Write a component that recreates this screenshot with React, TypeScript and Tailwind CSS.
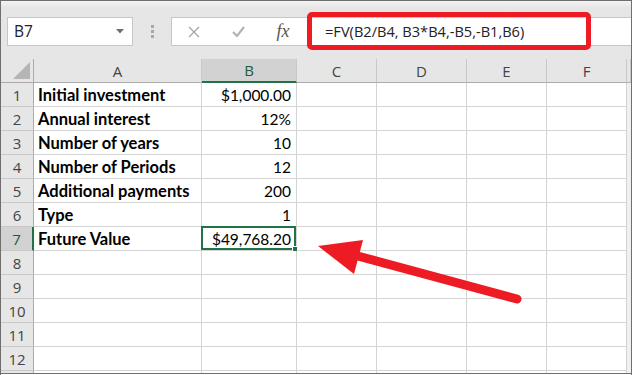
import React from 'react'

const ROWS: [string, string][] = [
  ['Initial investment', '$1,000.00'],
  ['Annual interest', '12%'],
  ['Number of years', '10'],
  ['Number of Periods', '12'],
  ['Additional payments', '200'],
  ['Type', '1'],
  ['Future Value', '$49,768.20'],
  ['', ''],
  ['', ''],
  ['', ''],
  ['', ''],
  ['', ''],
  ['', ''],
]

const COL_HEADS = ['A', 'B', 'C', 'D', 'E', 'F', '']

const hdrFont = "font-['Open_Sans',sans-serif] text-[15px] text-[#444]"

export default function App() {
  return (
    <div className="relative w-[632px] h-[375px] bg-white border-t border-l border-r border-[#6f6f6f] overflow-hidden">
      {/* toolbar */}
      <div className="h-[58px] bg-gradient-to-b from-[#f4f4f4] via-[#e6e6e6] via-[12%] to-[#e6e6e6] pt-[16px] pl-[6px] flex items-start">
        <div className="w-[126px] h-[29px] bg-white border border-[#c6c6c6] flex items-center justify-between pl-[6px] pr-[8px]">
          <span className="font-['Open_Sans',sans-serif] text-[15.5px] text-[#222]">B7</span>
          <svg width="8" height="5" viewBox="0 0 8 5"><path d="M0 0 H8 L4 4.5 Z" fill="#707070" /></svg>
        </div>
        <div className="w-[38px] h-[29px] flex flex-col items-center justify-center gap-[2px]">
          <span className="w-[3px] h-[3px] bg-[#a8a8a8]" />
          <span className="w-[3px] h-[3px] bg-[#a8a8a8]" />
          <span className="w-[3px] h-[3px] bg-[#a8a8a8]" />
        </div>
        <div className="flex-1 h-[29px] bg-white border-t border-b border-l border-[#c6c6c6] flex items-center">
          <div className="w-[44px] flex justify-center">
            <svg width="12" height="12" viewBox="0 0 12 12"><path d="M1 1 L11 11 M11 1 L1 11" stroke="#a6a6a6" strokeWidth="1.3" /></svg>
          </div>
          <div className="w-[44px] flex justify-center">
            <svg width="13" height="11" viewBox="0 0 13 11"><path d="M1 6 L5 10 L12 1" stroke="#b3b3b3" strokeWidth="2.2" fill="none" /></svg>
          </div>
          <span className="w-[46px] text-center font-['Liberation_Serif',serif] italic text-[18px] text-[#555]">fx</span>
          <span className="ml-[19px] font-['Open_Sans',sans-serif] text-[14.6px] text-[#222] whitespace-nowrap">
            =FV(B2/B4, B3*B4,-B5,-B1,B6)
          </span>
        </div>
      </div>

      {/* sheet */}
      <div className="h-[315px] overflow-hidden border-b border-[#6f6f6f]">
        <div className="grid grid-cols-[33px_168px_95px_80px_90px_80px_80px_1fr]">
          {/* column headers */}
          <div className="h-[24px] bg-[#e6e6e6] border-r border-b border-[#ababab] flex items-end justify-end pr-[3px] pb-[3px]">
            <svg width="17" height="17" viewBox="0 0 17 17"><path d="M17 0 V17 H0 Z" fill="#b5b5b5" /></svg>
          </div>
          {COL_HEADS.map((c, i) => (
            <div
              key={'h' + i}
              className={`h-[24px] flex items-center justify-center pt-[1px] border-r border-[#c8c8c8] ${hdrFont} ${
                c === 'B'
                  ? 'bg-[#d2d2d2] border-b-2 border-b-[#217346] !text-[#1e5a38]'
                  : 'bg-[#e6e6e6] border-b border-b-[#ababab]'
              }`}
            >
              {c}
            </div>
          ))}

          {ROWS.map(([label, val], r) => {
            const sel = r === 6
            return (
              <React.Fragment key={r}>
                <div
                  className={`h-[24px] flex items-center justify-center pt-[1px] border-b border-[#c8c8c8] ${hdrFont} ${
                    sel
                      ? 'bg-[#d2d2d2] border-r-2 border-r-[#217346] !text-[#1e5a38]'
                      : 'bg-[#e6e6e6] border-r border-r-[#ababab]'
                  }`}
                >
                  {r < 12 ? r + 1 : ''}
                </div>
                <div className="h-[24px] flex items-center pl-[4px] pt-[2px] border-r border-b border-[#d4d4d4] font-bold whitespace-nowrap font-['Lato',sans-serif] text-[16.5px] text-black">
                  {label}
                </div>
                <div className="relative h-[24px] flex items-center justify-end pr-[5px] pt-[2px] border-r border-b border-[#d4d4d4] font-['Lato',sans-serif] text-[15.5px] text-black">
                  {val}
                  {sel && (
                    <div className="absolute -left-[1px] -top-[1px] right-0 bottom-0 border-2 border-[#217346]">
                      <span className="absolute -right-[4px] -bottom-[4px] w-[6px] h-[6px] bg-[#217346] border border-white" />
                    </div>
                  )}
                </div>
                <div className="h-[24px] border-r border-b border-[#d4d4d4]" />
                <div className="h-[24px] border-r border-b border-[#d4d4d4]" />
                <div className="h-[24px] border-r border-b border-[#d4d4d4]" />
                <div className="h-[24px] border-r border-b border-[#d4d4d4]" />
                <div className="h-[24px] bg-[#f0f0f0]" />
              </React.Fragment>
            )
          })}
        </div>
      </div>

      {/* annotations */}
      <div className="absolute left-[306px] top-[11px] w-[284px] h-[38px] border-[5px] border-[#ed1c24] rounded-[5px] pointer-events-none" />
      <svg className="absolute left-0 top-0 pointer-events-none" width="633" height="375" viewBox="-1 -1 633 375">
        <line x1="515" y1="297" x2="352" y2="253" stroke="#ed1c24" strokeWidth="9" strokeLinecap="round" />
        <polygon points="316,244 361,238 352,272" fill="#ed1c24" />
      </svg>
    </div>
  )
}
